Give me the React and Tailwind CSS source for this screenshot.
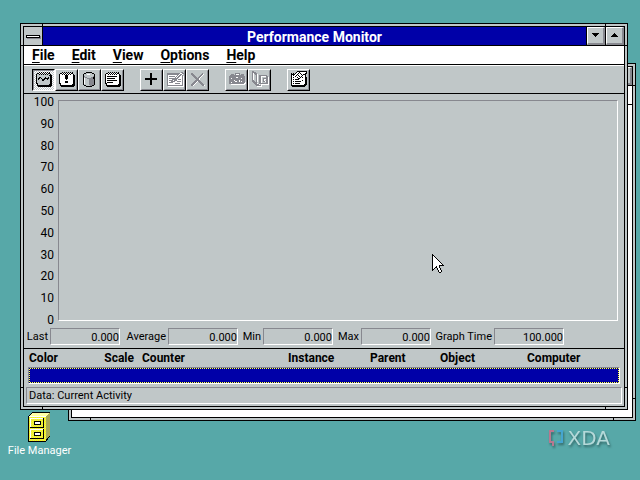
import { clsx } from "clsx";

const INK = { k: "#000000", w: "#ffffff", g: "#87888f", l: "#c0c7c8" };

// Sizes are rounded up to odd numbers so that the drawing centres on whole pixels
const Pixels = ({ rows, className }) => (
  <svg
    width={rows[0].length | 1}
    height={rows.length | 1}
    shapeRendering="crispEdges"
    className={clsx("shrink-0", className)}
    aria-hidden="true"
  >
    {rows.map((row, y) =>
      [...row].map((c, x) =>
        INK[c] ? <rect key={`${x}-${y}`} x={x} y={y} width="1" height="1" fill={INK[c]} /> : null
      )
    )}
  </svg>
);

const CHART = [
  "...k.k.k.k.k.k..",
  ".kkwkwkwkwkwkk..",
  "kllklklklklkllk.",
  "kllllllllllllkkk",
  "klllllllllllllkk",
  "kllkkllllkllklkk",
  "klkklkllkkkkklkk",
  "klklllkkkllkllkk",
  "klllllkkllllllkk",
  "klllllllllllllkk",
  "klllllllllllllkk",
  "kkllllllllllllkk",
  ".klllllllllllkkk",
  ".kkkkkkkkkkkkkkk",
  "..kkkkkkkkkkkkk.",
];

const ALERT = [
  "...k.k.k.k.k.k..",
  ".kkwkwkwkwkwkk..",
  "kwwkwkwkwkwkwwk.",
  "kwwwwwkkkwwwwwkk",
  "kwwwwwkkkwwwwwkk",
  "kwwwwwkkkwwwwwkk",
  "kwwwwwkkkwwwwwkk",
  "kwwwwwwkwwwwwwkk",
  "kwwwwwwwwwwwwwkk",
  "kwwwwwkkkwwwwwkk",
  "kwwwwwkkkwwwwwkk",
  "kkwwwwwwwwwwwwkk",
  ".kwwwwwwwwwwwkkk",
  ".kkkkkkkkkkkkkkk",
  "..kkkkkkkkkkkkk.",
];

const LOG = [
  "...kkkkkk.....",
  ".kkllllllkk...",
  "klllwwwllllk..",
  "kllllllllllk..",
  "kgllllllllgk..",
  "klggllllggkk..",
  "kwllggggggkk..",
  "kwllllgggggk..",
  "kwllllgggggk..",
  "kwllllgggggk..",
  "kwllllgggggk..",
  "kwllllgggggk..",
  "klllllgggggk..",
  ".kkllllggkk...",
  "...kkkkkk.....",
];

const REPORT = [
  "...k.k.k.k.k.k..",
  ".kkwkwkwkwkwkk..",
  "kwwkwkwkwkwkwwk.",
  "kwwwwwwwwwwwwwkk",
  "kwkkkkkkkkkkwwkk",
  "kwwwwwwwwwwwwwkk",
  "kwkkkkkkkkwwwwkk",
  "kwwwwwwwwwwwwwkk",
  "kwkkkkkkkkkkwwkk",
  "kwwwwwwwwwwwwwkk",
  "kwkkkkkkwwwwwwkk",
  "kkwwwwwwwwwwwwkk",
  ".kwwwwwwwwwwwkkk",
  ".kkkkkkkkkkkkkkk",
  "..kkkkkkkkkkkkk.",
];

const ADD = [
  ".....kk.......",
  ".....kk.......",
  ".....kk.......",
  ".....kk.......",
  ".....kk.......",
  "kkkkkkkkkkkk..",
  "kkkkkkkkkkkk..",
  ".....kk.......",
  ".....kk.......",
  ".....kk.......",
  ".....kk.......",
  ".....kk.......",
];

const MODIFY = [
  "..............gg.",
  "gggggggggggggwwgg",
  "ggggggggggggwggw.",
  "gwwwwwwwwwgwggwg.",
  "gwggggggwgwggwwgw",
  "gwwwwwwwgwggwwwgw",
  "gwgggggggggwwwwgw",
  "gwwwwgggggwgggwgw",
  "gwggggwgggwwwwwgw",
  "gwwwggggwwggggwgw",
  "gwggggwwwwwwwwwgw",
  "gwwwwwwwgggggwwgw",
  "gwwwwwwwwwwwwwwgw",
  "ggggggggggggggggw",
  ".wwwwwwwwwwwwwwww",
];

const DELETE = [
  "gg.........g..",
  "ggg.......ggw.",
  ".ggg.....ggw..",
  "..ggg...ggw...",
  "...ggg.ggw....",
  "....ggggw.....",
  ".....gggw.....",
  "....ggggg.....",
  "...gggwggg....",
  "..gggw..ggg...",
  ".gggw....ggg..",
  "gggw......ggg.",
  "ggw........ggw",
];

const SNAPSHOT = [
  "......ggggg......",
  "..ggg.gwwwg.ggg..",
  ".gggggggggggggg..",
  "gggggggggggggggg.",
  "gggggggwwggggggg.",
  "ggwgggggggggwggg.",
  "gggggggggggggggg.",
  "gggggwggggwggggg.",
  "ggggggwwggwgwggg.",
  "ggwgggggggggggggw",
  "gggggggggggggggww",
  "..wwwwwwwwwwwwww.",
];

const BOOKMARK = [
  "gg...............",
  "gggg.............",
  "gwggg............",
  "gw.ggw...........",
  "gw..gw.gggggggg..",
  "gw..gw.ggwwwwwgg.",
  "gw..gw.ggw....ggw",
  "gw..gw.ggw.gggggw",
  "gw..gw.ggw.gwwggw",
  "gg..gw.ggw.gw.ggw",
  "ggg.gw.ggw.ggwggw",
  ".gggg..ggw....ggw",
  "..gggw.gggggggggw",
  "...ggggw.wwwwwwww",
  "....gggggw.......",
  ".....wwwww.......",
];

const SETTINGS = [
  "......kkkkkkkkkk",
  ".....kwwkwwwwwwk",
  "k.k.kwwkwkwwwwkk",
  "kkkkwwkwwwkwkkk.",
  "kwkwwkwkwwwkwwk.",
  "kwwwkwwwkwkwwwk.",
  "kwkwwwkwwkwkwwkk",
  "kwwwwwwkkwwwwwkk",
  "kwkwkkkkwwwwwwkk",
  "kwwwwwwwwwwkwwkk",
  "kwkwkkkkkkwwwwkk",
  "kwwwwwwwwwwwwwkk",
  "kwkwkkkkkwwwwwkk",
  "kwwwwwwwwwwwwkkk",
  "kkkkkkkkkkkkkkk.",
  ".kkkkkkkkkkkkk..",
];

const CURSOR = [
  "k...........",
  "kk..........",
  "kwk.........",
  "kwwk........",
  "kwwwk.......",
  "kwwwwk......",
  "kwwwwwk.....",
  "kwwwwwwk....",
  "kwwwwwwwk...",
  "kwwwwwwwwk..",
  "kwwwwwwwwwk.",
  "kwwwwwwkkkkk",
  "kwwwkwwk....",
  "kwwkkwwk....",
  "kwk..kwwk...",
  "kk...kwwk...",
  "k.....kwwk..",
  "......kwwk..",
  ".......kk...",
];

const ARROW_DOWN = ["kkkkkkk", ".kkkkk.", "..kkk..", "...k..."];
const ARROW_UP = [...ARROW_DOWN].reverse();

const TOOLS = [
  [
    { label: "View a chart", rows: CHART, pressed: true },
    { label: "View the alerts", rows: ALERT },
    { label: "View output log file status", rows: LOG },
    { label: "View report data", rows: REPORT },
  ],
  [
    { label: "Add counter", rows: ADD },
    { label: "Modify selected counter", rows: MODIFY, disabled: true },
    { label: "Delete selected counter", rows: DELETE, disabled: true },
  ],
  [
    { label: "Update counter data", rows: SNAPSHOT, disabled: true },
    { label: "Place a commented bookmark", rows: BOOKMARK, disabled: true },
  ],
  [{ label: "Options", rows: SETTINGS }],
];

const MENUS = ["File", "Edit", "View", "Options", "Help"];

const TICKS = [100, 90, 80, 70, 60, 50, 40, 30, 20, 10, 0];

const READOUTS = [
  { id: "last", label: "Last", value: "0.000", width: "w-6" },
  { id: "average", label: "Average", value: "0.000", width: "w-12" },
  { id: "min", label: "Min", value: "0.000", width: "w-[25px]" },
  { id: "max", label: "Max", value: "0.000", width: "w-7" },
  { id: "graph-time", label: "Graph Time", value: "100.000", width: "w-[63px]" },
];

const COLUMNS = [
  { name: "Color", className: "w-[68px] text-left" },
  { name: "Scale", className: "w-[38px] text-right" },
  { name: "Counter", className: "w-[154px] pl-2 text-left" },
  { name: "Instance", className: "w-[82px] text-left" },
  { name: "Parent", className: "w-[70px] text-left" },
  { name: "Object", className: "w-[87px] text-left" },
  { name: "Computer", className: "text-left" },
];

// Sizing frame with the corner notches of a resizable window
const Frame = ({ className, children }) => (
  <div className={clsx("absolute border border-black bg-[#c0c7c8] p-0.5", className)}>
    <span className="absolute left-0 top-[21px] h-px w-0.5 bg-black" />
    <span className="absolute right-0 top-[21px] h-px w-0.5 bg-black" />
    <span className="absolute bottom-[21px] left-0 h-px w-0.5 bg-black" />
    <span className="absolute bottom-[21px] right-0 h-px w-0.5 bg-black" />
    <span className="absolute left-[21px] top-0 h-0.5 w-px bg-black" />
    <span className="absolute right-[21px] top-0 h-0.5 w-px bg-black" />
    <span className="absolute bottom-0 left-[21px] h-0.5 w-px bg-black" />
    <span className="absolute bottom-0 right-[21px] h-0.5 w-px bg-black" />
    <div className="flex h-full flex-col border border-black">{children}</div>
  </div>
);

const CaptionButton = ({ label, rows }) => (
  <button
    aria-label={label}
    className="flex w-[19px] items-center justify-center border-l border-black"
  >
    <span className="flex h-full w-full items-center justify-center border-b-2 border-l border-r-2 border-t border-b-[#87888f] border-l-white border-r-[#87888f] border-t-white">
      <Pixels rows={rows} />
    </span>
  </button>
);

const TitleBar = ({ title, active }) => (
  <div className="flex h-[19px] border-b border-black">
    <button
      aria-label="Control menu"
      className="flex w-[19px] items-center justify-center border-r border-black"
    >
      <span className="h-[3px] w-[14px] border border-black bg-white shadow-[1px_1px_0_#87888f]" />
    </button>
    <h1
      className={clsx(
        "flex-1 text-center text-[14px] font-bold leading-5",
        active ? "bg-[#0000a8] text-white" : "bg-white text-black"
      )}
    >
      {title}
    </h1>
    <CaptionButton label="Minimize" rows={ARROW_DOWN} />
    <CaptionButton label="Maximize" rows={ARROW_UP} />
  </div>
);

const MenuBar = () => (
  <nav className="flex h-[19px] items-center gap-[17px] border-b border-black bg-white px-2">
    {MENUS.map((name) => (
      <button key={name} className="text-[14px] font-bold leading-4">
        <span className="underline underline-offset-2">{name[0]}</span>
        {name.slice(1)}
      </button>
    ))}
  </nav>
);

const ToolButton = ({ label, rows, pressed, disabled }) => (
  <button
    aria-label={label}
    aria-pressed={pressed}
    disabled={disabled}
    className={clsx(
      "h-[22px] w-[23px] border",
      pressed
        ? "border-b-white border-l-black border-r-white border-t-black"
        : "border-b-black border-l-white border-r-black border-t-white"
    )}
  >
    <span
      className={clsx(
        "flex h-full w-full items-center justify-center border pb-px pl-0.5",
        pressed
          ? "border-b-transparent border-l-[#87888f] border-r-transparent border-t-[#87888f] bg-[repeating-conic-gradient(#fff_0_25%,#c0c7c8_0_50%)] bg-[length:2px_2px]"
          : "border-b-[#87888f] border-l-transparent border-r-[#87888f] border-t-transparent"
      )}
    >
      <Pixels rows={rows} />
    </span>
  </button>
);

const Toolbar = () => (
  <div className="flex h-[29px] gap-4 border-b border-t border-b-black border-t-white px-2 pt-[3px]">
    {TOOLS.map((group, i) => (
      <div key={i} className="flex">
        {group.map((tool) => (
          <ToolButton key={tool.label} {...tool} />
        ))}
      </div>
    ))}
  </div>
);

const Graph = () => (
  <div className="flex pr-1.5">
    <div className="flex w-[34px] flex-col justify-between pr-1 pt-px text-right text-[12px] leading-[14px]">
      {TICKS.map((tick) => (
        <span key={tick}>{tick}</span>
      ))}
    </div>
    <div className="my-1.5 h-[221px] flex-1 border border-b-white border-l-[#87888f] border-r-white border-t-[#87888f]" />
  </div>
);

const Readouts = () => (
  <div className="flex h-[22px] items-start border-b border-black pl-0.5 pt-px text-[11px] leading-[17px]">
    {READOUTS.map((item) => (
      <div key={item.id} className="flex">
        <label htmlFor={item.id} className={clsx("whitespace-nowrap pr-0.5 text-right", item.width)}>
          {item.label}
        </label>
        <output
          id={item.id}
          className="h-[17px] w-[70px] border border-b-white border-l-[#87888f] border-r-white border-t-[#87888f] text-right"
        >
          {item.value}
        </output>
      </div>
    ))}
  </div>
);

const Legend = () => (
  <div className="px-1 pb-[3px]">
    <table className="w-full table-fixed border-collapse">
      <thead>
        <tr className="h-[18px] text-[12px] leading-4">
          {COLUMNS.map((column) => (
            <th key={column.name} className={clsx("p-0 font-bold first:pl-px", column.className)}>
              {column.name}
            </th>
          ))}
        </tr>
      </thead>
      <tbody>
        <tr>
          <td colSpan={COLUMNS.length} className="p-0">
            <div className="border border-b-white border-l-[#87888f] border-r-white border-t-[#87888f]">
              <div className="bg-[repeating-conic-gradient(#ffff57_0_25%,#000057_0_50%)] bg-[length:2px_2px] p-px">
                <div className="h-[13px] bg-[#0000a8]" />
              </div>
            </div>
          </td>
        </tr>
      </tbody>
    </table>
  </div>
);

const StatusBar = () => (
  <p className="mx-0.5 mb-0.5 h-[17px] border border-b-white border-l-[#87888f] border-r-white border-t-[#87888f] pl-0.5 text-[11px] leading-[15px]">
    Data: Current Activity
  </p>
);

const FileManager = () => (
  <button className="absolute left-0 top-[411px] flex w-[79px] flex-col items-center text-[11px] leading-[14px] text-white">
    <svg width="23" height="31" viewBox="0 0 23 31" shapeRendering="crispEdges" aria-hidden="true">
      <defs>
        <pattern id="cabinet" width="2" height="2" patternUnits="userSpaceOnUse">
          <rect width="2" height="2" fill="#ffff00" />
          <rect width="1" height="1" fill="#e0e070" />
          <rect x="1" y="1" width="1" height="1" fill="#e0e070" />
        </pattern>
      </defs>
      <path d="M0 5 L4 1 H22 V25 L18 31 H0 Z" fill="#000" />
      <path d="M1 5 L5 2 H21 L18 5 Z" fill="#ffffa8" />
      <path d="M18 5 L22 2 V24 L18 29 Z" fill="#a8a857" />
      <rect x="1" y="5" width="17" height="25" fill="url(#cabinet)" />
      <rect x="1" y="5" width="17" height="1" fill="#fff" />
      {[7, 18].map((y) => (
        <g key={y}>
          <rect x="2" y={y} width="14" height="10" fill="#000" />
          <rect x="2" y={y} width="13" height="9" fill="#fff" />
          <rect x="3" y={y + 1} width="12" height="8" fill="url(#cabinet)" />
          <rect x="6" y={y + 3} width="7" height="4" fill="#000" />
          <rect x="7" y={y + 4} width="5" height="2" fill="#fff" />
        </g>
      ))}
    </svg>
    <span className="mt-0.5">File Manager</span>
  </button>
);

const Logo = () => (
  <div className="absolute bottom-8 right-[30px] flex items-center gap-1 drop-shadow-[1px_2px_1px_#336868]">
    <svg width="16" height="18" viewBox="0 0 16 18" fill="none" strokeWidth="2" aria-hidden="true">
      <path d="M6 2 H2 V13 H5 V17" stroke="#b8788f" />
      <path d="M9 2 H14 V13 H9" stroke="#45a5d0" />
    </svg>
    <span className="font-['DejaVu_Sans',sans-serif] text-[20px] leading-5 text-[#b5d9d9]">XDA</span>
  </div>
);

const App = () => (
  <main className="relative min-h-screen overflow-hidden bg-[#57a8a8] font-[Roboto,Arial,sans-serif] text-black">
    <Frame className="left-[68px] right-1 top-[63px] h-[358px]">
      <TitleBar title="" />
      <div className="h-[19px] border-b border-black bg-white" />
      <div className="flex-1 bg-white" />
    </Frame>
    <Frame className="left-5 right-3 top-[23px]">
      <TitleBar title="Performance Monitor" active />
      <MenuBar />
      <Toolbar />
      <Graph />
      <Readouts />
      <Legend />
      <StatusBar />
    </Frame>
    <FileManager />
    <Logo />
    <Pixels rows={CURSOR} className="absolute left-[432px] top-[254px]" />
  </main>
);

export default App;
